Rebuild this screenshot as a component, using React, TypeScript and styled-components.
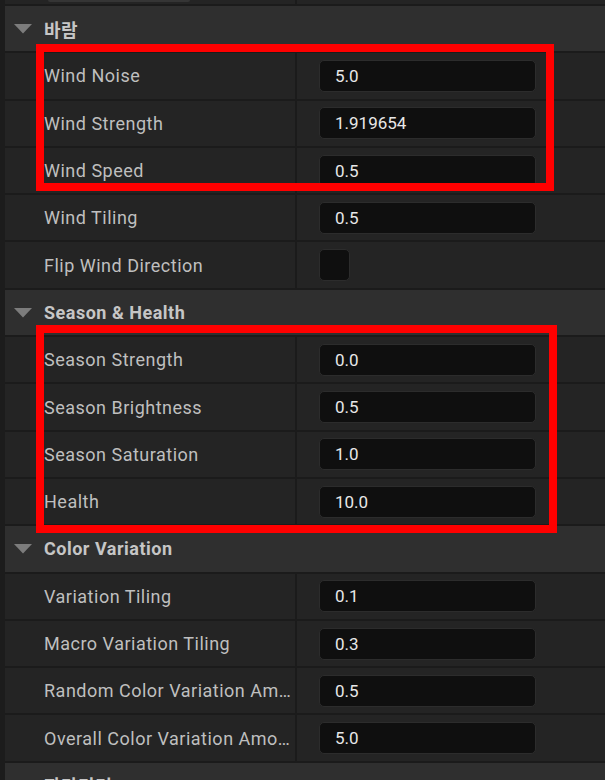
import React from 'react';
import styled, { createGlobalStyle } from 'styled-components';

type Field =
  | { kind: 'number'; label: string; value: string }
  | { kind: 'check'; label: string; checked: boolean };

interface Section {
  title: string;
  fields: Field[];
}

const sections: Section[] = [
  {
    title: '바람',
    fields: [
      { kind: 'number', label: 'Wind Noise', value: '5.0' },
      { kind: 'number', label: 'Wind Strength', value: '1.919654' },
      { kind: 'number', label: 'Wind Speed', value: '0.5' },
      { kind: 'number', label: 'Wind Tiling', value: '0.5' },
      { kind: 'check', label: 'Flip Wind Direction', checked: false },
    ],
  },
  {
    title: 'Season & Health',
    fields: [
      { kind: 'number', label: 'Season Strength', value: '0.0' },
      { kind: 'number', label: 'Season Brightness', value: '0.5' },
      { kind: 'number', label: 'Season Saturation', value: '1.0' },
      { kind: 'number', label: 'Health', value: '10.0' },
    ],
  },
  {
    title: 'Color Variation',
    fields: [
      { kind: 'number', label: 'Variation Tiling', value: '0.1' },
      { kind: 'number', label: 'Macro Variation Tiling', value: '0.3' },
      { kind: 'number', label: 'Random Color Variation Amount', value: '0.5' },
      { kind: 'number', label: 'Overall Color Variation Amount', value: '5.0' },
    ],
  },
  { title: '파라미터', fields: [] },
];

// red annotation frames drawn over the panel
const highlights = [
  { left: 31, top: 44, width: 518, height: 147 },
  { left: 31, top: 325, width: 521, height: 208 },
];

const App = () => {
  return (
    <>
      <GlobalStyle />
      <Panel>
        <PartialRow>
          <StubCell>
            <StubButton />
          </StubCell>
          <ValueCell />
        </PartialRow>
        {sections.map((section) => (
          <React.Fragment key={section.title}>
            <Header>
              <Arrow viewBox="0 0 18 10">
                <path d="M0 0 H18 L9 9.5 Z" fill="#7c7c7c" />
              </Arrow>
              <HeaderTitle>{section.title}</HeaderTitle>
            </Header>
            {section.fields.map((field) => (
              <Row key={field.label}>
                <NameCell>
                  <Label>{field.label}</Label>
                </NameCell>
                <ValueCell>
                  {field.kind === 'number' ? (
                    <NumberBox>{field.value}</NumberBox>
                  ) : (
                    <CheckBox $checked={field.checked} />
                  )}
                </ValueCell>
              </Row>
            ))}
          </React.Fragment>
        ))}
        {highlights.map((h, i) => (
          <Highlight
            key={i}
            style={{ left: h.left, top: h.top, width: h.width, height: h.height }}
          />
        ))}
      </Panel>
    </>
  );
};

const GlobalStyle = createGlobalStyle`
  html, body {
    margin: 0;
    padding: 0;
    background: #1c1c1c;
  }
  body {
    font-family: Roboto, "Noto Sans CJK KR", "Noto Sans", sans-serif;
  }
`;

const Panel = styled.div`
  position: relative;
  width: 605px;
  height: 780px;
  overflow: hidden;
  display: flex;
  flex-direction: column;
  box-sizing: border-box;
  border-left: 5px solid #1c1c1c;
  background: #242424;
`;

const rowBase = `
  display: grid;
  grid-template-columns: 292px 1fr;
  box-sizing: border-box;
  flex-shrink: 0;
  border-bottom: 2px solid #1b1b1b;
  background: #242424;
`;

const PartialRow = styled.div`
  ${rowBase}
  height: 6px;
`;

const StubCell = styled.div`
  border-right: 2px solid #1b1b1b;
`;

const StubButton = styled.div`
  margin-left: 43px;
  width: 142px;
  height: 2px;
  background: #353535;
  border-radius: 0 0 3px 3px;
`;

const Row = styled.div`
  ${rowBase}
  height: 47.3px;
`;

const NameCell = styled.div`
  display: flex;
  align-items: center;
  min-width: 0;
  border-right: 2px solid #1b1b1b;
  padding-left: 39px;
  padding-right: 1px;
  box-sizing: border-box;
`;

const ValueCell = styled.div`
  display: flex;
  align-items: center;
  padding-left: 22px;
`;

const Label = styled.span`
  color: #bfbfbf;
  font-size: 18px;
  letter-spacing: 0.5px;
  white-space: nowrap;
  overflow: hidden;
  text-overflow: ellipsis;
`;

const Header = styled.div`
  display: flex;
  align-items: center;
  flex-shrink: 0;
  box-sizing: border-box;
  height: 47.3px;
  padding-left: 9px;
  background: #2f2f2f;
  border-bottom: 2px solid #1b1b1b;
`;

const Arrow = styled.svg`
  width: 18px;
  height: 10px;
  margin-right: 12px;
  margin-top: 1px;
`;

const HeaderTitle = styled.span`
  color: #c6c6c6;
  font-size: 18px;
  font-weight: 700;
  letter-spacing: 0.5px;
`;

const NumberBox = styled.div`
  box-sizing: border-box;
  width: 217px;
  height: 32px;
  display: flex;
  align-items: center;
  padding-left: 15px;
  background: #0f0f0f;
  border: 1px solid #2c2c2c;
  border-radius: 5px;
  color: #e8e8e8;
  font-size: 17px;
`;

const CheckBox = styled.div<{ $checked: boolean }>`
  box-sizing: border-box;
  width: 31px;
  height: 32px;
  background: ${({ $checked }) => ($checked ? '#0070e0' : '#0f0f0f')};
  border: 1px solid #2c2c2c;
  border-radius: 5px;
`;

const Highlight = styled.div`
  position: absolute;
  box-sizing: border-box;
  border: 8px solid #ff0000;
  pointer-events: none;
`;

export default App;
